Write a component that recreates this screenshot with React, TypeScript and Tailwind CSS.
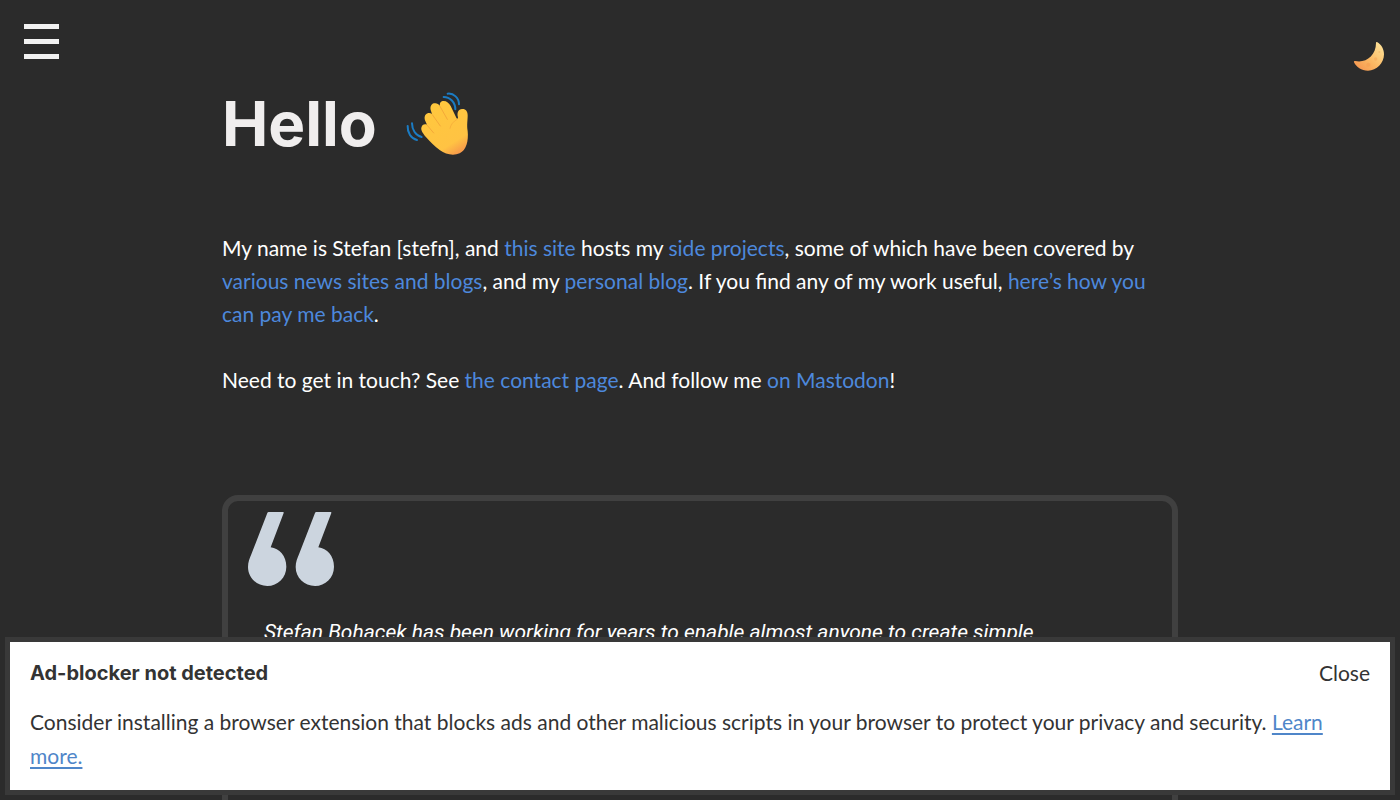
import { useState } from "react";
import type { ReactNode } from "react";

const QUOTE = "Stefan Bohacek has been working for years to enable almost anyone to create simple";

export default function App() {
  const [bannerOpen, setBannerOpen] = useState(true);

  return (
    <div className="min-h-screen bg-[#2b2b2b] text-[21px] leading-[33px] text-white font-['Lato',sans-serif]">
      <header className="flex items-start justify-between pt-6 pl-6 pr-4">
        <button type="button" aria-label="Open menu" className="flex w-[35px] cursor-pointer flex-col gap-[10px]">
          <span className="h-[5px] w-full bg-[#f2f2f2]" />
          <span className="h-[5px] w-full bg-[#f2f2f2]" />
          <span className="h-[5px] w-full bg-[#f2f2f2]" />
        </button>
        <button type="button" aria-label="Toggle dark mode" className="cursor-pointer pt-4">
          <MoonIcon />
        </button>
      </header>

      <main className="mx-auto w-full max-w-[956px] pt-5">
        <h1 className="flex h-16 items-center gap-7 text-[62px] leading-[64px] font-bold font-['Inter',sans-serif] text-[#f0eeee]">
          Hello
          <WavingHand />
        </h1>

        <div className="mt-[75px] space-y-[33px]">
          <p>
            My name is Stefan [stefn], and <TextLink>this site</TextLink> hosts my{" "}
            <TextLink>side projects</TextLink>, some of which have been covered by{" "}
            <TextLink>various news sites and blogs</TextLink>, and my <TextLink>personal blog</TextLink>. If you
            find any of my work useful, <TextLink>here’s how you can pay me back</TextLink>.
          </p>
          <p>
            Need to get in touch? See <TextLink>the contact page</TextLink>. And follow me{" "}
            <TextLink>on Mastodon</TextLink>!
          </p>
        </div>

        <blockquote className="mt-[99px] min-h-[400px] rounded-2xl border-6 border-[#404040] px-5 pt-[10px]">
          <QuoteMark />
          <p className="mt-[29px] px-4 italic font-['Roboto',sans-serif]">{QUOTE}</p>
        </blockquote>
      </main>

      {bannerOpen && (
        <section
          aria-labelledby="banner-title"
          className="fixed inset-x-[5px] bottom-[5px] border-5 border-[#393939] bg-white px-5 pt-[14px] pb-[17px] leading-[34px] text-[#333333]"
        >
          <div className="flex items-center justify-between">
            <h2 id="banner-title" className="text-xl leading-[34px] font-bold font-['Inter',sans-serif]">
              Ad-blocker not detected
            </h2>
            <button type="button" className="cursor-pointer" onClick={() => setBannerOpen(false)}>
              Close
            </button>
          </div>
          <p className="mt-[15px]">
            Consider installing a browser extension that blocks ads and other malicious scripts in your browser to
            protect your privacy and security.{" "}
            <a href="#learn" className="text-[#4f86c9] underline decoration-2 underline-offset-3">
              Learn more.
            </a>
          </p>
        </section>
      )}
    </div>
  );
}

function TextLink({ children }: { children: ReactNode }) {
  return (
    <a href="#" className="text-[#4d88dc] hover:underline">
      {children}
    </a>
  );
}

function MoonIcon() {
  return (
    <svg viewBox="96 60 96 96" className="block h-8 w-8" aria-hidden="true">
      <defs>
        <linearGradient id="moon" x1="0" y1="1" x2="1" y2="0">
          <stop offset="0" stopColor="#f58f4b" />
          <stop offset="0.45" stopColor="#fbb863" />
          <stop offset="1" stopColor="#ffe9a0" />
        </linearGradient>
      </defs>
      <path
        d="M171 66C184 73 192 87 192 103C192 130 170 152 144 152C124 152 109 141 102 127C101 124 103 122 106 123C136 130 168 108 168 69C168 66 169 65 171 66Z"
        fill="url(#moon)"
      />
      <circle cx="167" cy="117" r="5" fill="#f5a85a" opacity="0.6" />
      <circle cx="145" cy="134" r="6" fill="#f59a4e" opacity="0.5" />
      <circle cx="178" cy="96" r="3" fill="#f5b565" opacity="0.6" />
    </svg>
  );
}

function WavingHand() {
  return (
    <svg viewBox="18 21 192 192" className="block h-16 w-16 shrink-0" role="img" aria-label="Waving hand">
      <defs>
        <linearGradient id="hand" x1="0.2" y1="0" x2="0.75" y2="1">
          <stop offset="0" stopColor="#ffc83d" />
          <stop offset="0.8" stopColor="#ffc343" />
          <stop offset="1" stopColor="#f79a4a" />
        </linearGradient>
      </defs>
      <g fill="none" stroke="#1b7cc4" strokeWidth="6" strokeLinecap="round">
        <path d="M146 26C164 24 180 39 180 58" />
        <path d="M134 36C153 36 169 52 169 73" />
        <path d="M26 123C25 143 36 161 54 165" />
        <path d="M39 115C39 134 50 152 68 156" />
      </g>
      <path
        d="M80 155C73 147 65 135 67 128C69 119 76 116 84 119L80 110C74 99 77 88 86 85C90 83 95 84 99 87L96 78C92 67 96 57 105 55C112 53 118 56 123 62C121 54 126 48 134 48C143 48 150 54 155 63L172 98C174 103 177 102 177 97C173 83 178 73 189 72C200 71 206 79 206 91C206 107 203 119 206 139C209 168 202 196 182 205C163 213 139 208 123 196C107 184 94 170 80 155Z"
        fill="url(#hand)"
      />
      <g fill="none" stroke="#e88b32" strokeWidth="3" strokeLinecap="round">
        <path d="M123 64L145 103" opacity="0.5" />
        <path d="M100 89L124 123" opacity="0.5" />
        <path d="M84 120L104 144" opacity="0.5" />
        <path d="M174 103C163 109 155 119 153 130" opacity="0.35" />
      </g>
    </svg>
  );
}

function QuoteMark() {
  return (
    <svg viewBox="114 78 258 228" className="block h-[76px] w-[86px]" aria-hidden="true">
      <g fill="#ccd5df">
        <path d="M176 81H219Q222 81 221 84L182 187C208 190 229 213 229 245C229 278 203 303 172 303C140 303 114 278 114 246C114 231 119 221 124 208L172 84Q173 81 176 81Z" />
        <path d="M319 81H362Q365 81 364 84L325 187C351 190 372 213 372 245C372 278 346 303 315 303C283 303 257 278 257 246C257 231 262 221 267 208L315 84Q316 81 319 81Z" />
      </g>
    </svg>
  );
}
